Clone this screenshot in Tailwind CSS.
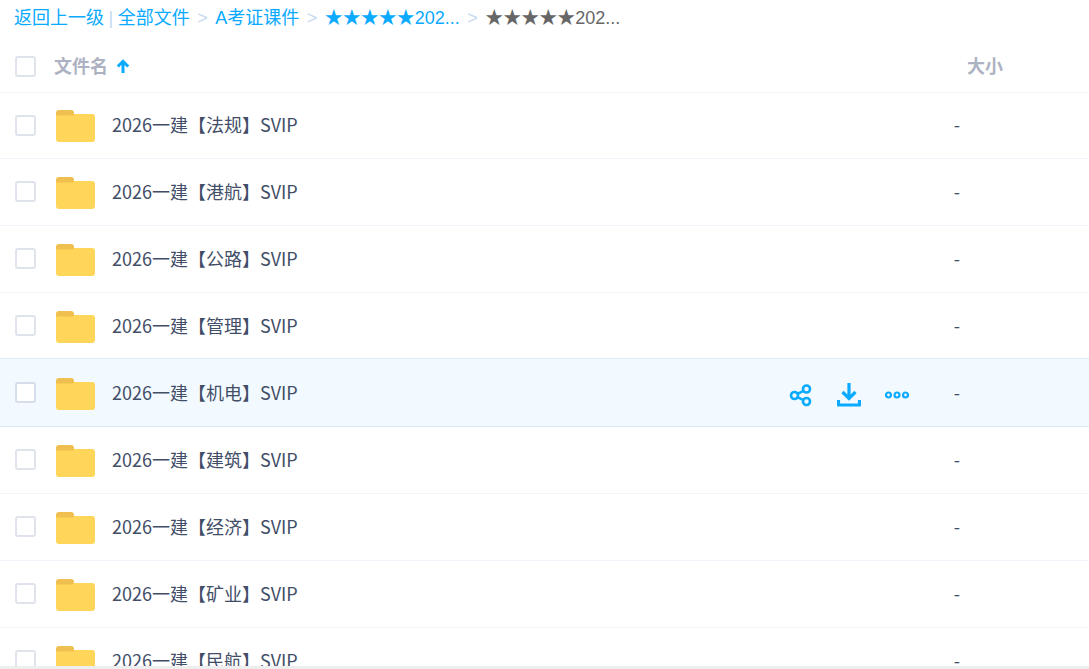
<!DOCTYPE html>
<html lang="zh">
<head>
<meta charset="utf-8">
<title>文件列表</title>
<script src="https://cdn.jsdelivr.net/npm/@tailwindcss/browser@4"></script>
</head>
<body class="bg-white font-['Noto_Sans_CJK_SC','Noto_Sans',sans-serif]">
<div class="w-[1089px] h-[669px] overflow-hidden flex flex-col">
  <div class="flex-1 min-h-0 overflow-hidden">
    <!-- breadcrumb -->
    <div class="h-[36px] pl-[14px] flex items-center text-[18px] leading-[36px] text-[#09aaff] font-['Liberation_Sans','Noto_Sans_CJK_SC',sans-serif] whitespace-nowrap">
      <a>返回上一级</a>
      <span class="mx-[4.5px] text-[#c5d8f0]">|</span>
      <a>全部文件</a>
      <span class="mx-[7.5px] text-[#c5d8f0]">&gt;</span>
      <a>A考证课件</a>
      <span class="mx-[7.5px] text-[#c5d8f0]">&gt;</span>
      <a>★★★★★202...</a>
      <span class="mx-[7.5px] text-[#c5d8f0]">&gt;</span>
      <span class="text-[#666666]">★★★★★202...</span>
    </div>
    <!-- header -->
    <div class="h-[57px] pt-[4px] flex items-center border-b border-[#f1f4fa] text-[18px] font-bold text-[#adb2c2]">
      <span class="ml-[15px] w-[21px] h-[21px] rounded-[3px] border-2 border-[#dfe3ec] bg-white"></span>
      <span class="ml-[18px] -mt-[2px] leading-none">文件名</span>
      <svg class="ml-[8px] -mt-px" width="14" height="14" viewBox="0 0 14 14"><path d="M7 14V2.500M1.800 7.500 7 2.300 12.200 7.500" fill="none" stroke="#09aaff" stroke-width="3"/></svg>
      <span class="ml-auto mr-[86px] -mt-[2px] leading-none">大小</span>
    </div>
    <!-- rows -->
    <div class="h-[66px] flex items-center border-b border-[#f1f4fa]">
      <span class="ml-[15px] -mt-px w-[21px] h-[21px] rounded-[3px] border-2 border-[#dfe3ec] bg-white"></span>
      <svg class="ml-[20px] mt-px" width="39" height="32" viewBox="0 0 39 32"><path d="M0 3a3 3 0 0 1 3-3h12a3 3 0 0 1 3 3v3H0z" fill="#efc04f"/><path d="M0 5.500h17l1-1.500h18a3 3 0 0 1 3 3v22a3 3 0 0 1-3 3H3a3 3 0 0 1-3-3z" fill="#ffd659"/></svg>
      <span class="ml-[17px] -mt-[2px] text-[18px] text-[#424e67]">2026一建【法规】SVIP</span>
      <span class="ml-auto mr-[129px] -mt-[2px] text-[18px] text-[#424e67]">-</span>
    </div>
    <div class="h-[67px] flex items-center border-b border-[#f1f4fa]">
      <span class="ml-[15px] -mt-px w-[21px] h-[21px] rounded-[3px] border-2 border-[#dfe3ec] bg-white"></span>
      <svg class="ml-[20px] mt-px" width="39" height="32" viewBox="0 0 39 32"><path d="M0 3a3 3 0 0 1 3-3h12a3 3 0 0 1 3 3v3H0z" fill="#efc04f"/><path d="M0 5.500h17l1-1.500h18a3 3 0 0 1 3 3v22a3 3 0 0 1-3 3H3a3 3 0 0 1-3-3z" fill="#ffd659"/></svg>
      <span class="ml-[17px] -mt-[2px] text-[18px] text-[#424e67]">2026一建【港航】SVIP</span>
      <span class="ml-auto mr-[129px] -mt-[2px] text-[18px] text-[#424e67]">-</span>
    </div>
    <div class="h-[67px] flex items-center border-b border-[#f1f4fa]">
      <span class="ml-[15px] -mt-px w-[21px] h-[21px] rounded-[3px] border-2 border-[#dfe3ec] bg-white"></span>
      <svg class="ml-[20px] mt-px" width="39" height="32" viewBox="0 0 39 32"><path d="M0 3a3 3 0 0 1 3-3h12a3 3 0 0 1 3 3v3H0z" fill="#efc04f"/><path d="M0 5.500h17l1-1.500h18a3 3 0 0 1 3 3v22a3 3 0 0 1-3 3H3a3 3 0 0 1-3-3z" fill="#ffd659"/></svg>
      <span class="ml-[17px] -mt-[2px] text-[18px] text-[#424e67]">2026一建【公路】SVIP</span>
      <span class="ml-auto mr-[129px] -mt-[2px] text-[18px] text-[#424e67]">-</span>
    </div>
    <div class="h-[66px] -mb-px flex items-center">
      <span class="ml-[15px] -mt-px w-[21px] h-[21px] rounded-[3px] border-2 border-[#dfe3ec] bg-white"></span>
      <svg class="ml-[20px] mt-px" width="39" height="32" viewBox="0 0 39 32"><path d="M0 3a3 3 0 0 1 3-3h12a3 3 0 0 1 3 3v3H0z" fill="#efc04f"/><path d="M0 5.500h17l1-1.500h18a3 3 0 0 1 3 3v22a3 3 0 0 1-3 3H3a3 3 0 0 1-3-3z" fill="#ffd659"/></svg>
      <span class="ml-[17px] -mt-[2px] text-[18px] text-[#424e67]">2026一建【管理】SVIP</span>
      <span class="ml-auto mr-[129px] -mt-[2px] text-[18px] text-[#424e67]">-</span>
    </div>
    <div class="h-[69px] pt-[1px] flex items-center bg-[#f2faff] border-y border-[#dceaf8]">
      <span class="ml-[15px] -mt-px w-[21px] h-[21px] rounded-[3px] border-2 border-[#d5deea] bg-white"></span>
      <svg class="ml-[20px] mt-px" width="39" height="32" viewBox="0 0 39 32"><path d="M0 3a3 3 0 0 1 3-3h12a3 3 0 0 1 3 3v3H0z" fill="#efc04f"/><path d="M0 5.500h17l1-1.500h18a3 3 0 0 1 3 3v22a3 3 0 0 1-3 3H3a3 3 0 0 1-3-3z" fill="#ffd659"/></svg>
      <span class="ml-[17px] -mt-[2px] text-[18px] text-[#424e67]">2026一建【机电】SVIP</span>
      <div class="ml-auto mt-[4px] flex items-center">
        <svg width="24" height="24" viewBox="0 0 24 24" fill="none" stroke="#09aaff" stroke-width="2.600"><circle cx="5.500" cy="12.500" r="3.500"/><circle cx="17.500" cy="6" r="3.500"/><circle cx="17.500" cy="18.500" r="3.500"/><path d="M8.500 10.800 14.500 7.800M8.500 14.200l6 3"/></svg>
        <svg class="ml-[24px]" width="24" height="26" viewBox="0 0 24 26" fill="none" stroke="#09aaff"><path d="M12 1v15M5.500 10l6.500 6.500 6.500-6.500" stroke-width="3.200"/><path d="M1.500 18v5h21V18" stroke-width="3.200" stroke-linejoin="round"/></svg>
        <svg class="ml-[24px] mr-[45px]" width="24" height="8" viewBox="0 0 24 8" fill="none" stroke="#09aaff" stroke-width="2.200"><circle cx="3.500" cy="4" r="2.500"/><circle cx="12" cy="4" r="2.500"/><circle cx="20.500" cy="4" r="2.500"/></svg>
      </div>
      <span class="mr-[129px] -mt-[2px] text-[18px] text-[#424e67]">-</span>
    </div>
    <div class="h-[67px] flex items-center border-b border-[#f1f4fa]">
      <span class="ml-[15px] -mt-px w-[21px] h-[21px] rounded-[3px] border-2 border-[#dfe3ec] bg-white"></span>
      <svg class="ml-[20px] mt-px" width="39" height="32" viewBox="0 0 39 32"><path d="M0 3a3 3 0 0 1 3-3h12a3 3 0 0 1 3 3v3H0z" fill="#efc04f"/><path d="M0 5.500h17l1-1.500h18a3 3 0 0 1 3 3v22a3 3 0 0 1-3 3H3a3 3 0 0 1-3-3z" fill="#ffd659"/></svg>
      <span class="ml-[17px] -mt-[2px] text-[18px] text-[#424e67]">2026一建【建筑】SVIP</span>
      <span class="ml-auto mr-[129px] -mt-[2px] text-[18px] text-[#424e67]">-</span>
    </div>
    <div class="h-[67px] flex items-center border-b border-[#f1f4fa]">
      <span class="ml-[15px] -mt-px w-[21px] h-[21px] rounded-[3px] border-2 border-[#dfe3ec] bg-white"></span>
      <svg class="ml-[20px] mt-px" width="39" height="32" viewBox="0 0 39 32"><path d="M0 3a3 3 0 0 1 3-3h12a3 3 0 0 1 3 3v3H0z" fill="#efc04f"/><path d="M0 5.500h17l1-1.500h18a3 3 0 0 1 3 3v22a3 3 0 0 1-3 3H3a3 3 0 0 1-3-3z" fill="#ffd659"/></svg>
      <span class="ml-[17px] -mt-[2px] text-[18px] text-[#424e67]">2026一建【经济】SVIP</span>
      <span class="ml-auto mr-[129px] -mt-[2px] text-[18px] text-[#424e67]">-</span>
    </div>
    <div class="h-[67px] flex items-center border-b border-[#f1f4fa]">
      <span class="ml-[15px] -mt-px w-[21px] h-[21px] rounded-[3px] border-2 border-[#dfe3ec] bg-white"></span>
      <svg class="ml-[20px] mt-px" width="39" height="32" viewBox="0 0 39 32"><path d="M0 3a3 3 0 0 1 3-3h12a3 3 0 0 1 3 3v3H0z" fill="#efc04f"/><path d="M0 5.500h17l1-1.500h18a3 3 0 0 1 3 3v22a3 3 0 0 1-3 3H3a3 3 0 0 1-3-3z" fill="#ffd659"/></svg>
      <span class="ml-[17px] -mt-[2px] text-[18px] text-[#424e67]">2026一建【矿业】SVIP</span>
      <span class="ml-auto mr-[129px] -mt-[2px] text-[18px] text-[#424e67]">-</span>
    </div>
    <div class="h-[67px] flex items-center border-b border-[#f1f4fa]">
      <span class="ml-[15px] -mt-px w-[21px] h-[21px] rounded-[3px] border-2 border-[#dfe3ec] bg-white"></span>
      <svg class="ml-[20px] mt-px" width="39" height="32" viewBox="0 0 39 32"><path d="M0 3a3 3 0 0 1 3-3h12a3 3 0 0 1 3 3v3H0z" fill="#efc04f"/><path d="M0 5.500h17l1-1.500h18a3 3 0 0 1 3 3v22a3 3 0 0 1-3 3H3a3 3 0 0 1-3-3z" fill="#ffd659"/></svg>
      <span class="ml-[17px] -mt-[2px] text-[18px] text-[#424e67]">2026一建【民航】SVIP</span>
      <span class="ml-auto mr-[129px] -mt-[2px] text-[18px] text-[#424e67]">-</span>
    </div>
  </div>
  <div class="h-[3px] bg-[#eeeeee] shrink-0"></div>
</div>
</body>
</html>
